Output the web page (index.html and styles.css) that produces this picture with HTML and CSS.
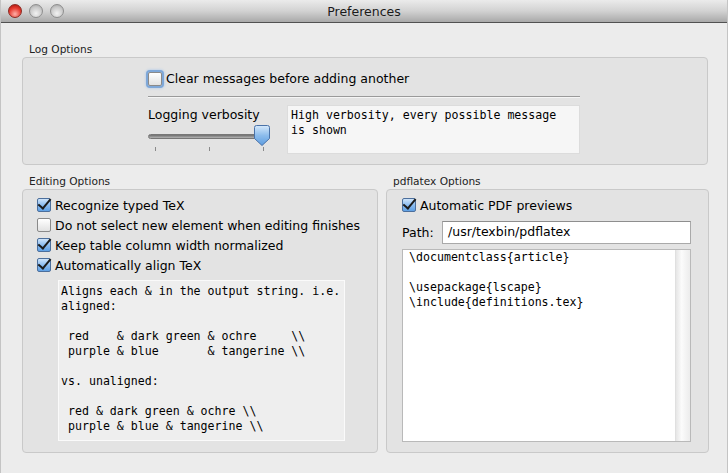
FILE: index.html
```html
<!DOCTYPE html>
<html>
<head>
<meta charset="utf-8">
<link rel="stylesheet" href="styles.css">
</head>
<body>
<div class="window">
  <div class="titlebar">
    <div class="lights">
      <span class="light red"></span>
      <span class="light"></span>
      <span class="light"></span>
    </div>
    <div class="title">Preferences</div>
  </div>
  <div class="content">
    <div class="group">
      <div class="glabel">Log Options</div>
      <div class="box logbox">
        <label class="check focus"><span class="cb"></span><span>Clear messages before adding another</span></label>
        <div class="sep"></div>
        <div class="verb">
          <div class="verbleft">
            <div class="vlabel">Logging verbosity</div>
            <div class="slider">
              <div class="track"></div>
              <svg class="knob" width="16" height="21" viewBox="0 0 16 21">
                <defs>
                  <linearGradient id="kg" x1="0" y1="0" x2="0" y2="1">
                    <stop offset="0" stop-color="#d6e9fb"/>
                    <stop offset="0.5" stop-color="#8cbcec"/>
                    <stop offset="1" stop-color="#5d9de0"/>
                  </linearGradient>
                </defs>
                <path d="M2.5 0.5 H13.5 Q15.5 0.5 15.5 2.5 V13.5 L8 20.5 L0.5 13.5 V2.5 Q0.5 0.5 2.5 0.5 Z" fill="url(#kg)" stroke="#4a72a8" stroke-width="1"/>
              </svg>
            </div>
            <div class="ticks"><span></span><span></span><span></span></div>
          </div>
          <div class="mono vtext">High verbosity, every possible message
is shown</div>
        </div>
      </div>
    </div>
    <div class="row2">
      <div class="group left">
        <div class="glabel">Editing Options</div>
        <div class="box editbox">
          <label class="check"><span class="cb on"></span><span>Recognize typed TeX</span></label>
          <label class="check"><span class="cb"></span><span>Do not select new element when editing finishes</span></label>
          <label class="check"><span class="cb on"></span><span>Keep table column width normalized</span></label>
          <label class="check"><span class="cb on"></span><span>Automatically align TeX</span></label>
          <div class="mono aligntext">Aligns each &amp; in the output string. i.e.
aligned:

 red    &amp; dark green &amp; ochre     \\
 purple &amp; blue       &amp; tangerine \\

vs. unaligned:

 red &amp; dark green &amp; ochre \\
 purple &amp; blue &amp; tangerine \\</div>
        </div>
      </div>
      <div class="group right">
        <div class="glabel">pdflatex Options</div>
        <div class="box pdfbox">
          <label class="check"><span class="cb on"></span><span>Automatic PDF previews</span></label>
          <div class="pathrow">
            <span class="plabel">Path:</span>
            <div class="pinput">/usr/texbin/pdflatex</div>
          </div>
          <div class="tarea">
            <div class="mono tatext">\documentclass{article}

\usepackage{lscape}
\include{definitions.tex}</div>
            <div class="scroll"></div>
          </div>
        </div>
      </div>
    </div>
  </div>
</div>
</body>
</html>
```
FILE: styles.css
```css
* { box-sizing: border-box; }
html, body { margin: 0; padding: 0; }
body { width: 728px; height: 473px; overflow: hidden; font-family: "DejaVu Sans", sans-serif; color: #000; }
.window { width: 728px; height: 473px; background: #ececec; border-left: 1px solid #c4c4c4; border-right: 1px solid #c4c4c4; display: flex; flex-direction: column; }
.titlebar { height: 23px; flex: none; background: linear-gradient(#ebebeb, #d2d2d2 50%, #a9a9a9); border-bottom: 1px solid #515151; position: relative; display: flex; align-items: center; justify-content: center; }
.lights { position: absolute; left: 7px; top: 4px; display: flex; gap: 7px; }
.light { width: 14px; height: 14px; border-radius: 50%; background: radial-gradient(circle at 50% 70%, #f2f2f2, #c8c8c8 60%, #9d9d9d); border: 1px solid #8e8e8e; }
.light.red { background: radial-gradient(circle at 50% 75%, #ffb0a8, #e63b30 55%, #a10d06); border-color: #8b2a22; }
.title { font-size: 12.5px; color: #1a1a1a; padding-top: 1px; }
.content { padding: 20px 20px 0 21px; display: flex; flex-direction: column; }
.glabel { font-size: 10.6px; color: #222; height: 13px; line-height: 13px; padding-left: 7px; }
.box { background: #e3e3e3; border: 1px solid #c9c9c9; border-radius: 4px; margin-top: 1px; }
.logbox { width: 686px; height: 108px; padding: 12px 0 0 125px; }
.check { display: flex; align-items: center; font-size: 12.5px; height: 20px; gap: 4px; white-space: nowrap; }
.cb { width: 14px; height: 14px; border: 1px solid #8a8a8a; border-radius: 2px; background: linear-gradient(#ffffff, #f0f0f0 50%, #e2e2e2); flex: none; position: relative; }
.cb.on { background: linear-gradient(#cfe4fa, #8dbdf0 50%, #5fa0e4); border-color: #4c6f9c; }
.cb.on::after { content: ""; position: absolute; left: 3px; top: -3px; width: 5px; height: 11px; border-right: 2.5px solid #1b1b1b; border-bottom: 2.5px solid #1b1b1b; transform: rotate(40deg); }
.focus .cb { box-shadow: 0 0 0 2px #7ea7d8, 0 0 3px 2px #a4c4ec; }
.logbox .check { height: 17px; }
.sep { width: 432px; height: 2px; border-top: 1px solid #9a9a9a; border-bottom: 1px solid #f5f5f5; margin-top: 9px; }
.verb { display: flex; margin-top: 7px; }
.verbleft { width: 139px; }
.vlabel { font-size: 12.5px; height: 16px; line-height: 16px; margin-top: 2px; }
.slider { position: relative; height: 22px; margin-top: 2px; }
.track { position: absolute; left: 0; top: 9px; width: 118px; height: 5px; border-radius: 3px; background: linear-gradient(#6e6e6e, #b5b5b5); border: 1px solid #777; }
.knob { position: absolute; left: 106px; top: 0; }
.ticks { display: flex; height: 5px; margin-top: 0; padding-left: 7px; gap: 53px; }
.ticks span { width: 1px; height: 4px; background: #8a8a8a; }
.mono { font-family: "DejaVu Sans Mono", monospace; font-size: 11.6px; line-height: 15px; white-space: pre; }
.vtext { width: 293px; height: 49px; background: #f6f6f6; border: 1px solid #dcdcdc; padding: 2px 3px; }
.row2 { display: flex; gap: 8px; margin-top: 10px; }
.editbox { width: 356px; height: 264px; padding: 5px 0 0 14px; }
.aligntext { width: 287px; height: 161px; background: #eeeeee; border: 1px solid #fafafa; margin: 5px 0 0 21px; padding: 3px 2px; }
.pdfbox { width: 323px; height: 264px; padding: 5px 0 0 15px; }
.pathrow { display: flex; align-items: center; margin-top: 6px; height: 23px; }
.plabel { font-size: 12.5px; width: 40px; padding-left: 0; }
.pinput { width: 249px; height: 23px; background: #fff; border: 1px solid #a9a9a9; border-top-color: #8e8e8e; font-size: 12.5px; line-height: 20px; padding-left: 5px; }
.tarea { width: 289px; height: 193px; background: #fff; border: 1px solid #b9b9b9; margin-top: 5px; display: flex; }
.tatext { flex: 1; padding: 0 0 0 6px; }
.scroll { width: 15px; background: linear-gradient(90deg, #e6e6e6, #fbfbfb 40%, #ececec); border-left: 1px solid #e0e0e0; }
```
